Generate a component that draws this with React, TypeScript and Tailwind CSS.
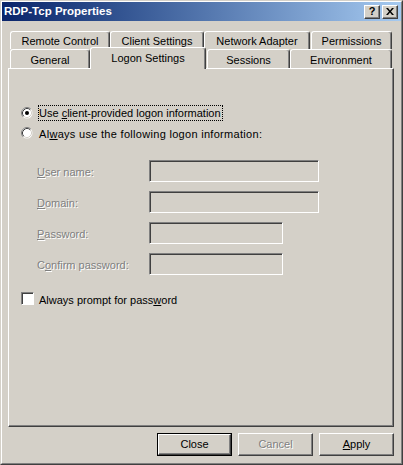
import type { ReactNode } from "react";

const raised =
  "border border-t-white border-l-white border-r-[#404040] border-b-[#404040] shadow-[inset_-1px_-1px_0_#808080]";
const sunken =
  "border border-t-[#808080] border-l-[#808080] border-r-white border-b-white shadow-[inset_1px_1px_0_#404040]";
const grayText = "text-[#808080] [text-shadow:1px_1px_0_#ffffff]";

const Tab = ({
  label,
  width,
  selected,
  className = "",
}: {
  label: string;
  width: string;
  selected?: boolean;
  className?: string;
}) => (
  <div
    className={`flex justify-center rounded-t-[3px] border-t border-l border-r border-t-white border-l-white border-r-[#404040] bg-[#d4d0c8] shadow-[inset_-1px_0_0_#808080] ${width} ${
      selected
        ? "relative z-10 -mb-[1px] h-[22px] items-center pb-[1px]"
        : "h-full items-center pt-[2px]"
    } ${className}`}
  >
    {label}
  </div>
);

const Radio = ({ checked }: { checked?: boolean }) => (
  <svg width="12" height="12" viewBox="0 0 12 12" className="shrink-0">
    <circle cx="6" cy="6" r="5.5" fill="#ffffff" />
    <path d="M2.11 9.89 A5.5 5.5 0 0 1 9.89 2.11" fill="none" stroke="#808080" />
    <path d="M2.82 9.18 A4.5 4.5 0 0 1 9.18 2.82" fill="none" stroke="#404040" />
    <path d="M9.18 2.82 A4.5 4.5 0 0 1 2.82 9.18" fill="none" stroke="#d4d0c8" />
    {checked ? <circle cx="6" cy="6" r="2" fill="#000000" /> : null}
  </svg>
);

const Field = ({
  label,
  width,
  className = "",
}: {
  label: ReactNode;
  width: string;
  className?: string;
}) => (
  <div className={`flex h-[22px] items-center pl-[28px] ${className}`}>
    <div className={`w-[112px] pt-[3px] ${grayText}`}>{label}</div>
    <div className={`h-[22px] bg-[#d4d0c8] ${sunken} ${width}`} />
  </div>
);

const Button = ({
  children,
  isDefault,
  disabled,
}: {
  children: ReactNode;
  isDefault?: boolean;
  disabled?: boolean;
}) => (
  <div
    className={`h-[23px] w-[75px] ${isDefault ? "border border-black" : ""}`}
  >
    <div
      className={`flex h-full w-full items-center justify-center ${raised} ${
        disabled ? grayText : ""
      }`}
    >
      {children}
    </div>
  </div>
);

const App = () => {
  return (
    <div className="h-[465px] w-[403px] border border-t-[#d4d0c8] border-l-[#d4d0c8] border-r-[#404040] border-b-[#404040] bg-[#d4d0c8] font-['Liberation_Sans',Arial,sans-serif] text-[11px] leading-none text-black">
      <div className="flex h-full flex-col border border-t-white border-l-white border-r-[#808080] border-b-[#808080]">
        {/* caption */}
        <div className="flex h-[19px] shrink-0 items-center bg-linear-to-r from-[#0a246a] to-[#a6caf0] pl-[2px] pr-[3px]">
          <span className="flex-1 pt-[1px] text-[11.5px] font-bold text-white">
            RDP-Tcp Properties
          </span>
          <div
            className={`flex h-[14px] w-[16px] items-center justify-center bg-[#d4d0c8] text-[11px] font-bold ${raised}`}
          >
            ?
          </div>
          <div
            className={`ml-[2px] flex h-[14px] w-[16px] items-center justify-center bg-[#d4d0c8] ${raised}`}
          >
            <svg width="8" height="7" viewBox="0 0 8 7">
              <path
                d="M0 0h2l2 2.5L6 0h2L5 3.5 8 7H6L4 4.5 2 7H0l3-3.5z"
                fill="#000000"
              />
            </svg>
          </div>
        </div>

        {/* tabs + page */}
        <div className="mt-[10px] px-[6px]">
          <div className="flex h-[37px] flex-col">
            <div className="flex h-[18px] pl-[2px]">
              <Tab label="Remote Control" width="w-[100px]" />
              <Tab label="Client Settings" width="w-[94px]" />
              <Tab label="Network Adapter" width="w-[106px]" />
              <Tab label="Permissions" width="w-[81px]" className="ml-[1px]" />
            </div>
            <div className="flex h-[19px] items-end pl-[2px]">
              <Tab label="General" width="w-[80px]" />
              <Tab label="Logon Settings" width="w-[116px]" selected />
              <Tab label="Sessions" width="w-[83px]" className="ml-[1px]" />
              <Tab label="Environment" width="w-[102px]" />
            </div>
          </div>

          <div className="h-[359px] w-[386px] border border-t-white border-l-white border-r-[#404040] border-b-[#404040] shadow-[inset_-1px_-1px_0_#808080]">
            <div className="mt-[36px] flex h-[16px] items-center pl-[12px]">
              <Radio checked />
              <span className="ml-[5px] border border-dotted border-black pr-[1px] pt-[2px] pb-[1px]">
                Use <u>c</u>lient-provided logon information
              </span>
            </div>
            <div className="mt-[4px] flex h-[16px] items-center pl-[12px]">
              <Radio />
              <span className="ml-[6px] pt-[2px] tracking-[0.3px]">
                Al<u>w</u>ays use the following logon information:
              </span>
            </div>

            <Field
              className="mt-[19px]"
              width="w-[170px]"
              label={
                <>
                  <u>U</u>ser name:
                </>
              }
            />
            <Field
              className="mt-[9px]"
              width="w-[170px]"
              label={
                <>
                  <u>D</u>omain:
                </>
              }
            />
            <Field
              className="mt-[9px]"
              width="w-[134px]"
              label={
                <>
                  <u>P</u>assword:
                </>
              }
            />
            <Field
              className="mt-[9px]"
              width="w-[134px]"
              label={
                <>
                  C<u>o</u>nfirm password:
                </>
              }
            />

            <div className="mt-[17px] flex h-[13px] items-center pl-[12px]">
              <div className={`h-[13px] w-[13px] shrink-0 bg-white ${sunken}`} />
              <span className="ml-[5px] pt-[3px]">
                Always prompt for pass<u>w</u>ord
              </span>
            </div>
          </div>
        </div>

        {/* buttons */}
        <div className="mt-[6px] flex justify-end gap-[6px] pr-[7px]">
          <Button isDefault>Close</Button>
          <Button disabled>Cancel</Button>
          <Button>
            <span>
              <u>A</u>pply
            </span>
          </Button>
        </div>
      </div>
    </div>
  );
};

export default App;
